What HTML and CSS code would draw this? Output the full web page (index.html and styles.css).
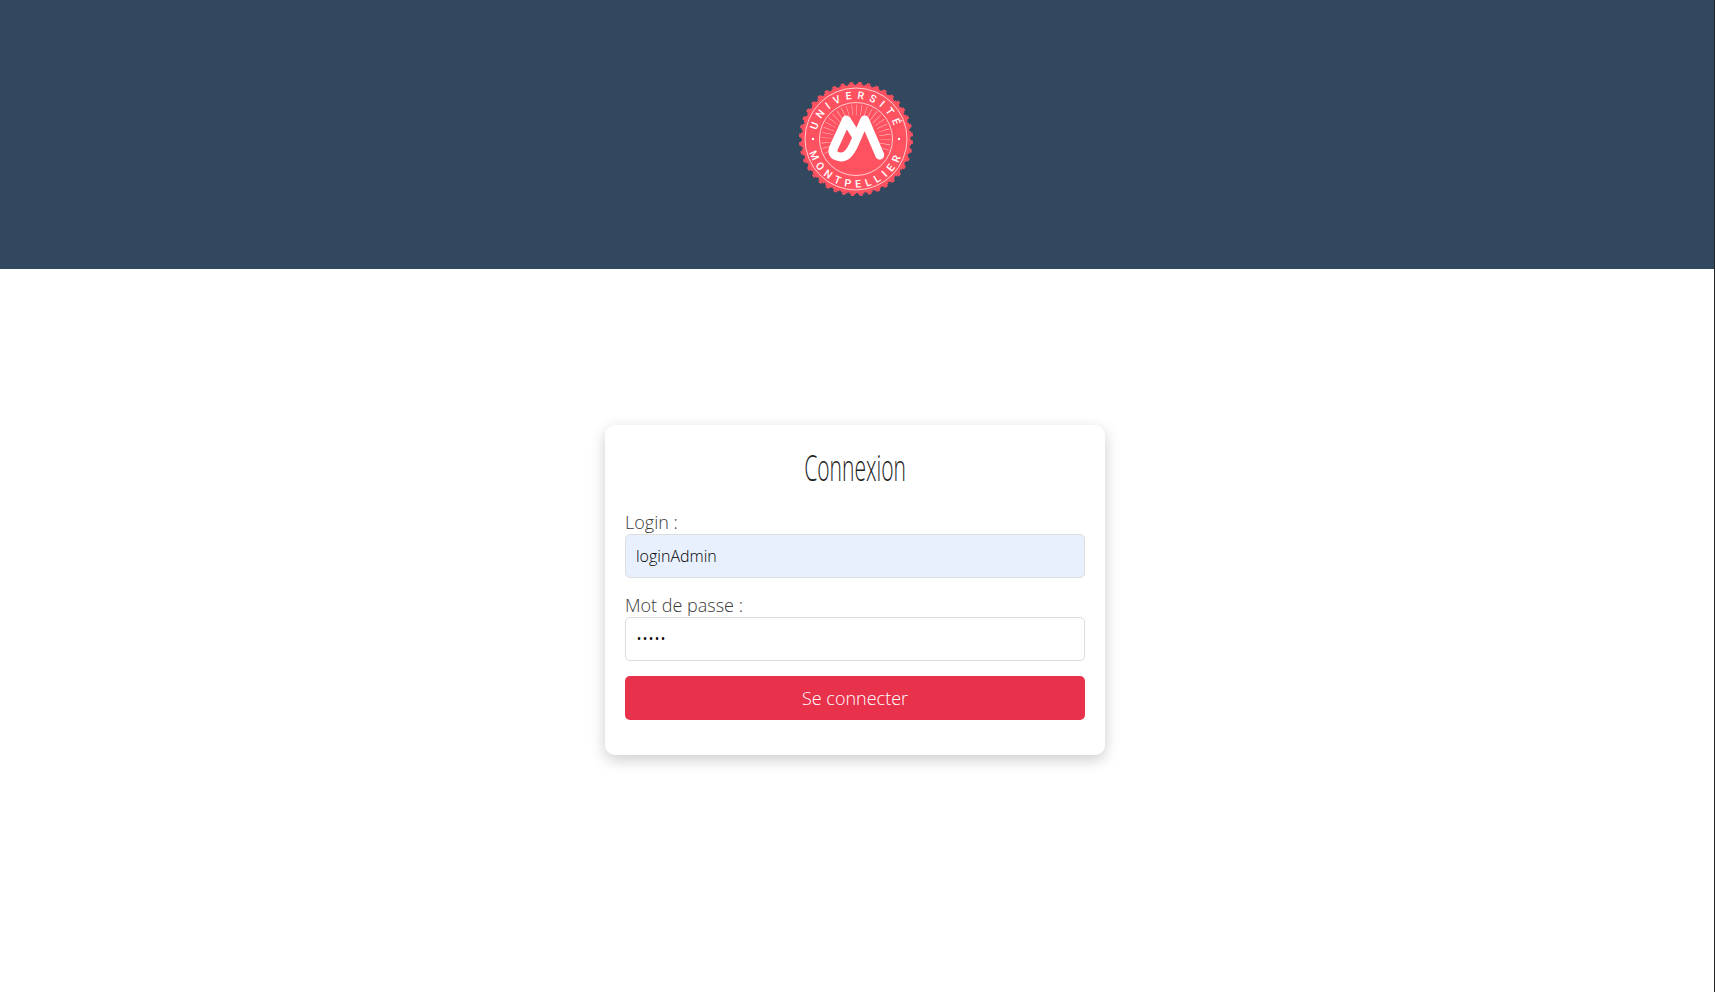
FILE: index.html
```html
<!DOCTYPE html>
<html lang="fr">
<head>
    <meta charset="UTF-8">
    <meta name="viewport" content="width=device-width, initial-scale=1.0">
    <title>Connexion</title>
    <link rel="stylesheet" href="styles.css">
</head>
<body>
    <!-- Bandeau avec le logo -->
    <header class="top-band">
        <svg class="logo" viewBox="0 0 120 120" width="120" height="120" role="img" aria-label="Université de Montpellier">
            <defs>
                <path id="arc-top" d="M 20 60 A 40 40 0 0 1 100 60"/>
                <path id="arc-bottom" d="M 11.5 60 A 48.5 48.5 0 0 0 108.5 60"/>
            </defs>
            <circle class="seal" cx="60" cy="60" r="54"/>
            <circle class="teeth-in" cx="60" cy="60" r="54.2"/>
            <circle class="teeth-out" cx="60" cy="60" r="56"/>
            <circle class="ring" cx="60" cy="60" r="51"/>
            <circle class="ring" cx="60" cy="60" r="36.5"/>
            <path class="rays" d="M 33.7 72.3 A 29 29 0 1 1 86.3 72.3"/>
            <path class="um" d="M 83.7 76 L 68.7 41 L 57.7 66 Q 52 78.3 45 78 Q 34 77 38 68 L 50.3 41 L 59.7 56"/>
            <text class="seal-text"><textPath href="#arc-top" startOffset="50%">UNIVERSITÉ</textPath></text>
            <text class="seal-text"><textPath href="#arc-bottom" startOffset="50%">MONTPELLIER</textPath></text>
            <circle class="seal-dot" cx="17" cy="60" r="1.2"/>
            <circle class="seal-dot" cx="103" cy="60" r="1.2"/>
        </svg>
    </header>

    <!-- Formulaire de connexion -->
    <main class="page">
        <form class="login-card">
            <h1 class="login-title"><span>Connexion</span></h1>
            <div class="field">
                <label for="login">Login :</label>
                <input class="autofilled" type="text" id="login" value="loginAdmin">
            </div>
            <div class="field">
                <label for="password">Mot de passe :</label>
                <input type="password" id="password" value="admin">
            </div>
            <button type="button" class="login-btn">Se connecter</button>
        </form>
    </main>
</body>
</html>
```

FILE: styles.css
```css
html, body {
    height: 100%;
}
body {
    margin: 0;
    box-sizing: border-box;
    border-right: 1px solid #222;
    background-color: #fff;
    font-family: "Open Sans", sans-serif;
    font-weight: 300;
    color: #333;
    overflow: hidden;
}
.top-band {
    height: 269px;
    box-sizing: border-box;
    padding: 79px 3px 0 0;
    background-color: #32485f;
    display: flex;
    justify-content: center;
    align-items: flex-start;
}

/* Logo */
.seal {
    fill: #ff5260;
}
.teeth-in {
    fill: none;
    stroke: #ff5260;
    stroke-width: 2;
    stroke-dasharray: 6.6 1.91;
}
.teeth-out {
    fill: none;
    stroke: #ff5260;
    stroke-width: 2;
    stroke-dasharray: 3.6 5.2;
    stroke-dashoffset: -1.6;
}
.ring {
    fill: none;
    stroke: #fff;
    stroke-width: 0.7;
}
.rays {
    fill: none;
    stroke: #ffc4c8;
    stroke-width: 11;
    stroke-dasharray: 0.5 4;
}
.um {
    fill: none;
    stroke: #fff;
    stroke-width: 9;
    stroke-linecap: round;
    stroke-linejoin: round;
}
.seal-text {
    font-family: "Roboto", sans-serif;
    font-size: 10.5px;
    font-weight: 500;
    letter-spacing: 5px;
    fill: #fff;
    text-anchor: middle;
}
.seal-dot {
    fill: #fff;
}

/* Carte */
.page {
    display: flex;
    justify-content: center;
    padding: 156px 4px 0 0;
}
.login-card {
    width: 500px;
    height: 330px;
    box-sizing: border-box;
    padding: 20px;
    border-radius: 10px;
    background: #fff;
    box-shadow: 0 5px 15px rgba(0, 0, 0, 0.2);
}
.login-title {
    margin: 0;
    height: 65px;
    text-align: center;
    font-size: 36px;
    font-weight: 300;
    line-height: 46px;
    color: #222;
}
/* Police du titre tres etroite, pas installee : on resserre */
.login-title span {
    display: inline-block;
    transform: scaleX(0.585);
}
.field {
    margin-bottom: 15px;
}
.field label {
    display: block;
    font-size: 18px;
    line-height: 24px;
    color: #3a3a3a;
}
.field input {
    display: block;
    width: 100%;
    height: 44px;
    box-sizing: border-box;
    padding: 0 10px;
    border: 1px solid #ddd;
    border-radius: 5px;
    background: #fff;
    font-family: "Open Sans", sans-serif;
    font-size: 16px;
    font-weight: 300;
    color: #000;
}
.field input.autofilled {
    background-color: #e8f0fe;
}
.login-btn {
    display: block;
    width: 100%;
    height: 44px;
    border: none;
    border-radius: 5px;
    background-color: #e8314b;
    color: #fff;
    font-family: "Open Sans", sans-serif;
    font-size: 18px;
    font-weight: 300;
    cursor: pointer;
}
```
